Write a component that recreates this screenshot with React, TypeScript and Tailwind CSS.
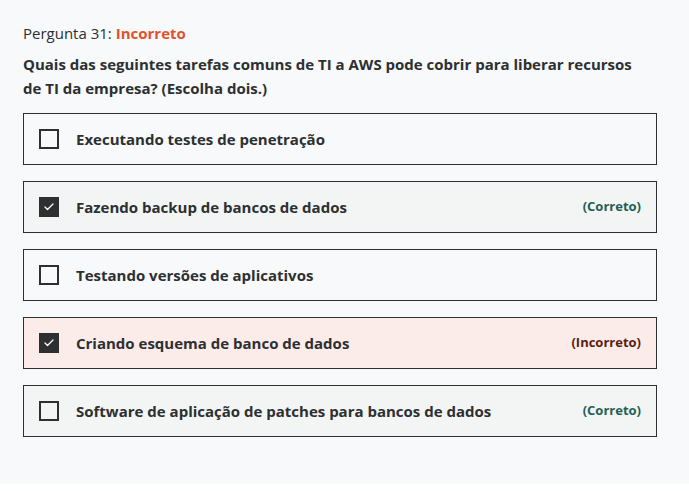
import { Check } from "lucide-react";

type Option = {
  label: string;
  checked: boolean;
  status?: "correct" | "incorrect";
};

const options: Option[] = [
  { label: "Executando testes de penetração", checked: false },
  { label: "Fazendo backup de bancos de dados", checked: true, status: "correct" },
  { label: "Testando versões de aplicativos", checked: false },
  { label: "Criando esquema de banco de dados", checked: true, status: "incorrect" },
  {
    label: "Software de aplicação de patches para bancos de dados",
    checked: false,
    status: "correct",
  },
];

const OptionRow = ({ option }: { option: Option }) => {
  const bg =
    option.status === "correct"
      ? "bg-[#f2f5f4]"
      : option.status === "incorrect"
        ? "bg-[#fbece9]"
        : "bg-[#f7f9fa]";

  return (
    <div
      className={`flex items-center h-[52px] border border-[#2d2f31] pl-[15px] pr-[15px] ${bg}`}
    >
      {option.checked ? (
        <span className="w-5 h-5 bg-[#2d2f31] flex items-center justify-center shrink-0">
          <Check className="w-3 h-3 text-white" strokeWidth={2.5} />
        </span>
      ) : (
        <span className="w-5 h-5 border-2 border-[#2d2f31] shrink-0" />
      )}
      <span className="ml-[17px] flex-1 text-[15px] font-bold text-[#2d2f31]">
        {option.label}
      </span>
      {option.status === "correct" && (
        <span className="text-[13px] font-bold text-[#1e6055]">(Correto)</span>
      )}
      {option.status === "incorrect" && (
        <span className="text-[13px] font-bold text-[#5a1e10]">(Incorreto)</span>
      )}
    </div>
  );
};

const App = () => {
  return (
    <div className="min-h-screen bg-white font-['Open_Sans','Liberation_Sans',sans-serif]">
      <div className="h-[484px] bg-[#f7f9fa] pt-[22px] pl-[23px]">
        <div className="w-[634px]">
          <p className="text-[15px] leading-[22px] text-[#2d2f31]">
            Pergunta 31: <span className="font-bold text-[#e2512f]">Incorreto</span>
          </p>
          <p className="mt-2 max-w-[622px] text-[15px] leading-6 font-bold text-[#2d2f31]">
            Quais das seguintes tarefas comuns de TI a AWS pode cobrir para liberar
            recursos de TI da empresa? (Escolha dois.)
          </p>
          <div className="mt-[13px] flex flex-col gap-4">
            {options.map((o) => (
              <OptionRow key={o.label} option={o} />
            ))}
          </div>
        </div>
      </div>
    </div>
  );
};

export default App;
